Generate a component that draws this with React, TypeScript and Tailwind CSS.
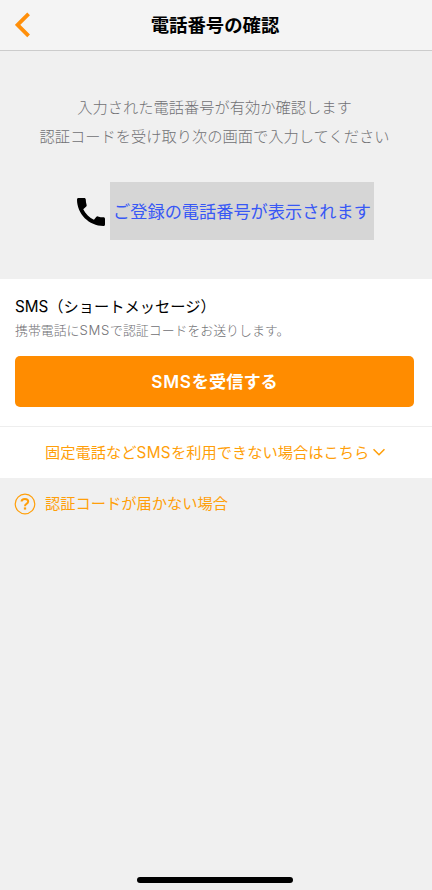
type IconProps = {
  className?: string;
};

function BackIcon({ className }: IconProps) {
  return (
    <svg viewBox="0 0 16 26" className={className} fill="none" stroke="currentColor" strokeWidth="3.8">
      <path d="M13.6 1.8 2.6 12.8l11 11" />
    </svg>
  );
}

function PhoneIcon({ className }: IconProps) {
  return (
    <svg viewBox="3 3 18 18" className={className} fill="currentColor">
      <path d="M20.01 15.38c-1.23 0-2.42-.2-3.53-.56a.977.977 0 0 0-1.01.24l-1.57 1.97c-2.83-1.35-5.48-3.9-6.89-6.83l1.95-1.66c.27-.28.35-.67.24-1.02-.37-1.11-.56-2.3-.56-3.53 0-.54-.45-.99-.99-.99H4.19C3.65 3 3 3.24 3 3.99 3 13.28 10.73 21 20.01 21c.71 0 .99-.63.99-1.18v-3.45c0-.54-.45-.99-.99-.99z" />
    </svg>
  );
}

function ChevronIcon({ className }: IconProps) {
  return (
    <svg viewBox="0 0 12 8" className={className} fill="none" stroke="currentColor" strokeWidth="1.6">
      <path d="M.5 1.2 6 6.7l5.5-5.5" />
    </svg>
  );
}

function HelpIcon({ className }: IconProps) {
  return (
    <svg viewBox="0 0 22 22" className={className} fill="none" stroke="currentColor">
      <circle cx="11" cy="11" r="9.8" strokeWidth="1.2" />
      <path d="M7.6 8.6c0-1.8 1.4-2.7 3.3-2.7s3.3 1 3.3 2.6c0 1.2-.8 1.8-1.7 2.4-1 .6-1.4 1-1.4 1.9v.4" strokeWidth="2" />
      <path d="M11 14.4v2.2" strokeWidth="2.3" />
    </svg>
  );
}

function App() {
  return (
    <div className="flex h-[890px] w-[432px] flex-col bg-[#f0f0f0] font-['Inter','Noto_Sans_CJK_JP',sans-serif] text-[15.25px] text-black">
      {/* Header */}
      <header className="grid h-[51px] shrink-0 grid-cols-[1fr_auto_1fr] items-center border-b border-[#cccccc] bg-[#f4f4f4] pr-[17px] pl-[15px]">
        <button type="button" aria-label="戻る" className="justify-self-start text-[#ff8f0a]">
          <BackIcon className="h-[26px] w-4" />
        </button>
        <h1 className="text-[18.4px] leading-6 font-bold">電話番号の確認</h1>
      </header>

      {/* Phone number */}
      <section className="flex h-[228px] shrink-0 flex-col items-center pt-[42px]">
        <p className="pr-[3px] text-center leading-[29px] font-light whitespace-nowrap text-[#707074]">
          入力された電話番号が有効か確認します
          <br />
          認証コードを受け取り次の画面で入力してください
        </p>
        <div className="mt-[31px] flex items-center gap-[5px] self-start pl-[77px]">
          <PhoneIcon className="mt-0.5 h-7 w-7" />
          <div className="flex h-[58px] w-[264px] items-center justify-center bg-[#d6d6d6] pt-px text-[17.2px] whitespace-nowrap text-[#3858f5]">
            ご登録の電話番号が表示されます
          </div>
        </div>
      </section>

      {/* SMS */}
      <section className="h-[147px] shrink-0 bg-white px-[15px] pt-[17px]">
        <h2 className="leading-[22px]">SMS（ショートメッセージ）</h2>
        <p className="mt-0.5 h-5 text-[12.9px] leading-5 font-light text-[#707074]">
          携帯電話に<span className="text-[13.2px] tracking-[0.7px]">SMS</span>で認証コードをお送りします。
        </p>
        <button type="button" className="mt-4 h-[51px] w-[399px] rounded-[5px] bg-[#ff8c00] text-[17.2px] font-bold text-white">
          <span className="font-semibold tracking-[0.8px]">SMS</span>を受信する
        </button>
      </section>

      <button type="button" className="flex h-[52px] shrink-0 items-center gap-1 border-t border-[#eeeeee] bg-white pt-0.5 pl-[45px] whitespace-nowrap text-[#ff9f0a]">
        <span>
          固定電話など<span className="tracking-[0.4px]">SMS</span>を利用できない場合はこちら
        </span>
        <ChevronIcon className="mb-[3px] h-2 w-3" />
      </button>

      {/* Help */}
      <a href="#help" className="flex h-[51px] shrink-0 items-center gap-[9px] pl-3.5 text-[#ff9f0a]">
        <HelpIcon className="h-[22px] w-[22px]" />
        <span className="pt-0.5">認証コードが届かない場合</span>
      </a>

      <div className="mt-auto mb-[7px] ml-[137px] h-1.5 w-[156px] shrink-0 rounded-full bg-black" />
    </div>
  );
}

export default App;
